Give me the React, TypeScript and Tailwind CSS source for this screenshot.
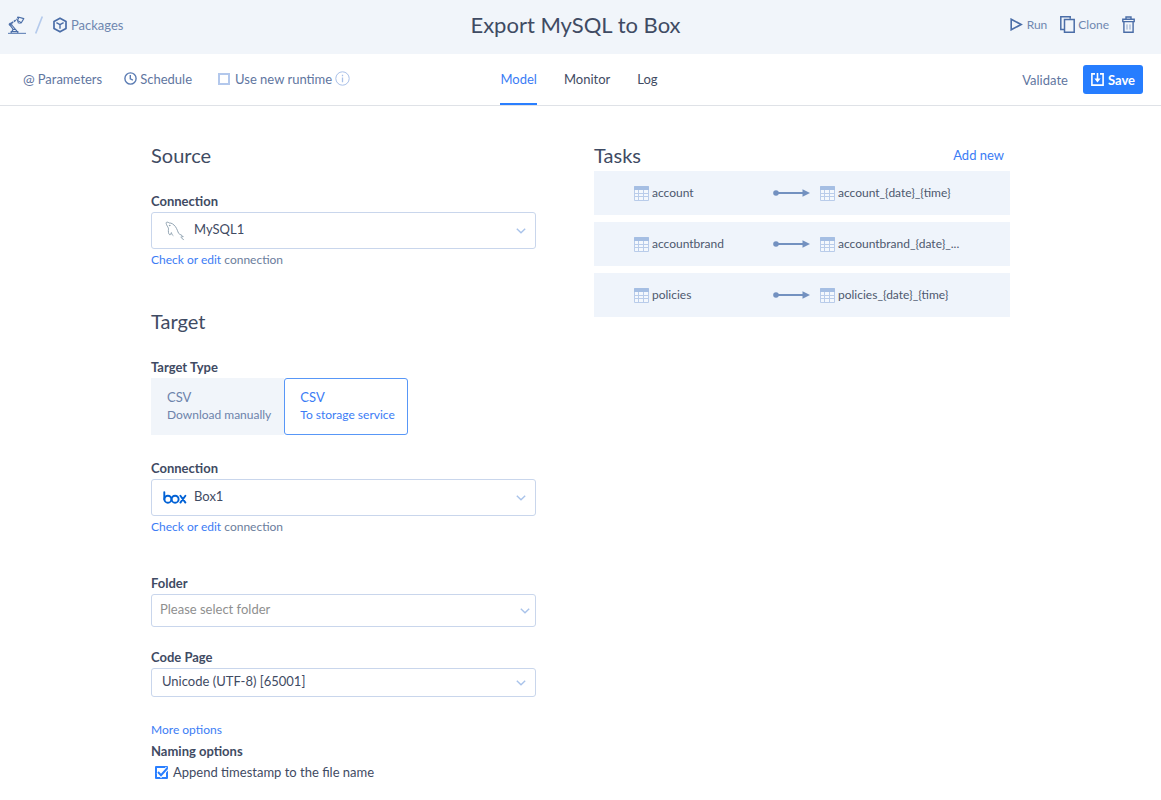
import type { ReactNode } from "react";

const tasks = [
  { source: "account", target: "account_{date}_{time}" },
  { source: "accountbrand", target: "accountbrand_{date}_{time}" },
  { source: "policies", target: "policies_{date}_{time}" },
];

function shorten(name: string) {
  return name.length > 24 ? name.slice(0, 20) + "..." : name;
}

function RobotArmIcon() {
  return (
    <svg width="18" height="18" viewBox="0 0 18 18" fill="none" stroke="#4a6da7" aria-hidden="true">
      <path d="M0 17.4h18" strokeWidth="1.2" stroke="#6f8dbd" />
      <path d="M3.2 17v-1.4h6.6V17M4 15.4l1-1.9h2.6l1.4 1.9" strokeWidth="1.2" />
      <path d="M2.4 9.6l3.2 4.2M3.8 9l3.6 4.4" strokeWidth="1.1" />
      <path d="M3.2 7.4L9 3.2" strokeWidth="1.6" strokeDasharray="2.4 .8" />
      <circle cx="2.4" cy="8.4" r="1.4" fill="#4a6da7" strokeWidth=".6" />
      <path d="M9.4 4.4L11 1.2l4.8 1.4-2.5 4.2z" strokeWidth="1.1" strokeLinejoin="round" />
      <path d="M9.6 4.4l.9 3M13 6.600l-1.600.8" strokeWidth="1.1" />
      <circle cx="10" cy="1.400" r="1" fill="#4a6da7" stroke="none" />
    </svg>
  );
}

function PackageIcon() {
  return (
    <svg width="14" height="16" viewBox="0 0 14 16" fill="none" stroke="#4a6da7" strokeWidth="1.700" strokeLinejoin="round" aria-hidden="true">
      <path d="M7 1.200l6 3.300v7L7 14.800l-6-3.300v-7z" />
      <path d="M3.400 5.600L7 7.600l3.600-2M7 7.600v4.200" strokeWidth="1.400" />
    </svg>
  );
}

function ClockIcon() {
  return (
    <svg width="13" height="13" viewBox="0 0 13 13" fill="none" stroke="#5b7cb3" strokeWidth="1.400" aria-hidden="true">
      <circle cx="6.500" cy="6.500" r="5.600" />
      <path d="M6.300 3v3.800l2.600 1.300" />
    </svg>
  );
}

function InfoIcon() {
  return (
    <svg width="15" height="15" viewBox="0 0 15 15" fill="none" stroke="#a9c0e8" aria-hidden="true">
      <circle cx="7.500" cy="7.500" r="6.700" strokeWidth="1" />
      <path d="M7.500 6.400v4.800M7.500 3.800v1.400" strokeWidth="1.300" />
    </svg>
  );
}

function RunIcon() {
  return (
    <svg width="13" height="13" viewBox="0 0 13 13" fill="none" stroke="#4a6da7" strokeWidth="1.600" aria-hidden="true">
      <path d="M1.200 1.200v10.600l10-5.300z" />
    </svg>
  );
}

function CloneIcon() {
  return (
    <svg width="15" height="17" viewBox="0 0 15 17" fill="none" stroke="#4a6da7" strokeWidth="1.500" aria-hidden="true">
      <path d="M4.500 13.500H.8V.8h9.400v2" />
      <path d="M4.500 3.500h9.700v12.700H4.500z" />
    </svg>
  );
}

function TrashIcon() {
  return (
    <svg width="13" height="17" viewBox="0 0 13 17" fill="none" stroke="#4a6da7" strokeWidth="1.400" aria-hidden="true">
      <path d="M4 3V1h5v2M.8 5.600V3.200h11.400v2.400zM1.900 5.800v10.400h9.200V5.800" />
      <path d="M5 8.400v5.200M8 8.400v5.200" strokeWidth="1" stroke="#8ba4cc" />
    </svg>
  );
}

function SaveIcon() {
  return (
    <svg width="13" height="13" viewBox="0 0 13 13" fill="none" stroke="#fff" strokeWidth="1.600" aria-hidden="true">
      <path d="M4 .9H.9v11.200h11.200V.9H9M6.500 0v7" />
      <path d="M3.400 5.600h6.200L6.500 9.400z" fill="#fff" stroke="none" />
    </svg>
  );
}

function ChevronIcon() {
  return (
    <svg width="10" height="6" viewBox="0 0 10 6" fill="none" stroke="#a9c3ea" strokeWidth="1.400" aria-hidden="true">
      <path d="M.8.8L5 4.800 9.200.8" />
    </svg>
  );
}

function MySqlIcon() {
  return (
    <svg width="20" height="20" viewBox="0 0 20 20" fill="none" stroke="#8499a8" strokeWidth=".9" strokeLinecap="round" strokeLinejoin="round" aria-hidden="true">
      <path d="M8 14.600c-.9-.4-1.300-1.900-1.600-3-.5.7-.8 2.600-1.700 2.200C3.300 13.200 3.200 9.600 3.500 8.200 3.700 6.800 2.400 5.600 1.800 4.200 1.300 3.100.8 1.700 1.500 1.300c.9-.5 2.100.2 2.900.7 1.800-.3 4.300 1.300 6 3.600 1.700 2.300 2.400 5.200 3.300 6.800.9 1.200 3.300 1.500 4.500 3.300-1.200 0-2 .1-2.400.5.8.9 2 1.300 2.700 2.500" />
      <circle cx="4.600" cy="4.600" r=".3" />
    </svg>
  );
}

function BoxLogo() {
  return (
    <svg width="24" height="13" viewBox="0 0 24 13" fill="none" stroke="#0061d5" strokeWidth="1.900" strokeLinecap="round" aria-hidden="true">
      <path d="M1.300 1.100v7.200" />
      <circle cx="4.900" cy="8.200" r="3.500" />
      <circle cx="12.100" cy="8.200" r="3.500" />
      <path d="M17.400 4.800l5 6.800M22.400 4.800l-5 6.800" />
    </svg>
  );
}

function GridIcon() {
  return (
    <svg width="15" height="15" viewBox="0 0 15 15" aria-hidden="true" className="shrink-0">
      <rect width="15" height="15" rx="1" fill="#b9ccea" />
      <path d="M0 1a1 1 0 011-1h13a1 1 0 011 1v3H0z" fill="#a5bee3" />
      <path d="M1 4h3v3H1zM5 4h4v3H5zM10 4h4v3h-4zM1 8h3v2H1zM5 8h4v2H5zM10 8h4v2h-4zM1 11h3v3H1zM5 11h4v3H5zM10 11h4v3h-4z" fill="#f4f8fd" />
    </svg>
  );
}

function ArrowIcon() {
  return (
    <svg width="37" height="8" viewBox="0 0 37 8" fill="#7391c0" aria-hidden="true">
      <circle cx="3" cy="4" r="2.800" />
      <path d="M3 3h27v2H3z" />
      <path d="M29.500.3L37 4l-7.500 3.700z" />
    </svg>
  );
}

type FieldProps = {
  id: string;
  label: string;
  options: string[];
  selectClass: string;
  chevronClass: string;
  icon?: ReactNode;
};

function SelectField({ id, label, options, selectClass, chevronClass, icon }: FieldProps) {
  return (
    <div>
      <label htmlFor={id} className="block font-bold">
        {label}
      </label>
      <div className="relative">
        <select
          id={id}
          className={
            "block w-full appearance-none rounded-[3px] border border-[#c9d6ec] bg-white pb-[3px] outline-none focus:border-[#2a7fff] " +
            selectClass
          }
        >
          {options.map((option) => (
            <option key={option}>{option}</option>
          ))}
        </select>
        {icon && (
          <span className="pointer-events-none absolute inset-y-0 left-3 flex w-6 items-center justify-center">{icon}</span>
        )}
        <span className={"pointer-events-none absolute inset-y-0 flex items-center " + chevronClass}>
          <ChevronIcon />
        </span>
      </div>
    </div>
  );
}

function ConnectionLink() {
  return (
    <p className="text-xs leading-[22px] text-[#6b7d9c]">
      <a href="#connection" className="text-[#3b7cf5]">
        Check or edit
      </a>{" "}
      connection
    </p>
  );
}

export default function App() {
  return (
    <div className="min-h-screen bg-white font-['Lato',sans-serif] text-[13px] leading-[22px] text-[#3f4b63]">
      <header className="grid h-[54px] grid-cols-[1fr_auto_1fr] items-center bg-[#f1f5fa] pr-[18px] pb-[5px] pl-2 text-[#6f87b0]">
        <nav aria-label="Breadcrumb" className="flex items-center">
          <a href="#home" aria-label="Home">
            <RobotArmIcon />
          </a>
          <svg width="8" height="18" viewBox="0 0 8 18" aria-hidden="true" className="mr-[10px] ml-[9px]">
            <path d="M.7 17.500L7.300.5" stroke="#b4caec" strokeWidth="1.600" />
          </svg>
          <a href="#packages" className="flex items-center gap-1">
            <PackageIcon />
            Packages
          </a>
        </nav>
        <h1 className="text-[22px] leading-8 text-[#3f4b63]">Export MySQL to Box</h1>
        <div className="flex items-center justify-end gap-[13px] text-xs">
          <button type="button" className="flex items-center gap-1">
            <RunIcon />
            Run
          </button>
          <button type="button" className="flex items-center gap-[3px]">
            <CloneIcon />
            Clone
          </button>
          <button type="button" aria-label="Delete" className="pr-2">
            <TrashIcon />
          </button>
        </div>
      </header>

      <div className="grid h-[52px] grid-cols-[1fr_auto_1fr] items-center border-b border-[#dfe2e7] pr-[18px] pl-[15px] text-[#5f769f]">
        <div className="flex items-center pb-[2px]">
          <button type="button" className="ml-2 flex items-center gap-[3px]">
            <span className="text-sm leading-[22px]">@</span>
            Parameters
          </button>
          <button type="button" className="ml-[22px] flex items-center gap-[3px]">
            <ClockIcon />
            Schedule
          </button>
          <label className="ml-[26px] flex items-center gap-[5px]">
            <input type="checkbox" className="size-3 appearance-none border-2 border-[#b3c8ec] bg-white checked:bg-[#2a7fff]" />
            Use new runtime
          </label>
          <button type="button" aria-label="About the new runtime" className="ml-[3px]">
            <InfoIcon />
          </button>
        </div>
        <nav aria-label="Views" className="flex gap-[27px] self-stretch text-[#3f4b63]">
          <a href="#model" aria-current="page" className="flex items-center border-b-2 border-[#2a7fff] text-[#3b7cf5]">
            Model
          </a>
          <a href="#monitor" className="flex items-center border-b-2 border-transparent">
            Monitor
          </a>
          <a href="#log" className="flex items-center border-b-2 border-transparent">
            Log
          </a>
        </nav>
        <div className="flex items-center justify-end gap-[15px]">
          <button type="button">Validate</button>
          <button type="button" className="flex h-[29px] items-center gap-1 rounded-[3px] bg-[#267dff] px-2 font-bold text-white">
            <SaveIcon />
            Save
          </button>
        </div>
      </div>

      <main className="mx-auto grid max-w-[859px] grid-cols-[385fr_416fr] gap-x-[58px] pt-[35px] pb-4">
        <div>
          <section>
            <h2 className="mb-[21px] text-xl leading-7">Source</h2>
            <SelectField
              id="source-connection"
              label="Connection"
              options={["MySQL1"]}
              selectClass="h-[37px] pr-8 pl-[42px]"
              chevronClass="right-[10px]"
              icon={<MySqlIcon />}
            />
            <ConnectionLink />
          </section>

          <section className="mt-9">
            <h2 className="mb-[21px] text-xl leading-7">Target</h2>
            <div role="group" aria-labelledby="target-type">
              <span id="target-type" className="block font-bold">
                Target Type
              </span>
              <div className="flex">
                <button type="button" aria-pressed="false" className="h-[57px] bg-[#f1f5fa] pr-[13px] pb-[2px] pl-4 text-left text-[#6d83ab]">
                  <span className="block leading-[18px]">CSV</span>
                  <span className="block text-xs leading-[18px]">Download manually</span>
                </button>
                <button
                  type="button"
                  aria-pressed="true"
                  className="h-[57px] rounded-[3px] border border-[#5897f7] bg-white pr-3 pb-[2px] pl-[15px] text-left text-[#3b7cf5]"
                >
                  <span className="block leading-[18px]">CSV</span>
                  <span className="block text-xs leading-[18px]">To storage service</span>
                </button>
              </div>
            </div>
            <div className="mt-[22px]">
              <SelectField
                id="target-connection"
                label="Connection"
                options={["Box1"]}
                selectClass="h-[37px] pr-8 pl-[42px]"
                chevronClass="right-[10px]"
                icon={<BoxLogo />}
              />
              <ConnectionLink />
            </div>
            <div className="mt-[34px]">
              <SelectField
                id="folder"
                label="Folder"
                options={["Please select folder"]}
                selectClass="h-[33px] pr-8 pl-2 text-[#8f8f8f]"
                chevronClass="right-[6px]"
              />
            </div>
            <div className="mt-[19px]">
              <SelectField
                id="code-page"
                label="Code Page"
                options={["Unicode (UTF-8) [65001]"]}
                selectClass="h-[29px] pr-8 pl-[10px]"
                chevronClass="right-[10px]"
              />
            </div>
            <a href="#more-options" className="mt-[22px] block w-fit text-xs leading-[22px] text-[#3b7cf5]">
              More options
            </a>
            <h3 className="leading-5 font-bold">Naming options</h3>
            <label className="flex w-fit items-center gap-[5px] pl-1">
              <span className="relative flex size-[13px]">
                <input type="checkbox" defaultChecked className="peer size-[13px] appearance-none rounded-[1px] border-2 border-[#2a7fff] bg-white" />
                <svg
                  width="13"
                  height="13"
                  viewBox="0 0 13 13"
                  fill="none"
                  aria-hidden="true"
                  className="pointer-events-none absolute inset-0 hidden peer-checked:block"
                >
                  <path d="M3 6l3 3.200L12.500 2" stroke="#fff" strokeWidth="4" />
                  <path d="M3 6l3 3.200L12.500 2" stroke="#2a7fff" strokeWidth="2" />
                </svg>
              </span>
              Append timestamp to the file name
            </label>
          </section>
        </div>

        <section>
          <div className="mb-[2px] flex items-center justify-between pr-[6px]">
            <h2 className="text-xl leading-7">Tasks</h2>
            <button type="button" className="text-[#3b7cf5]">
              Add new
            </button>
          </div>
          <ul className="flex flex-col gap-[7px]">
            {tasks.map((task) => (
              <li
                key={task.source}
                className="grid h-11 grid-cols-[139fr_37px_152fr] items-center bg-[#eff4fb] pr-12 pl-10 text-xs text-[#4d586e]"
              >
                <span className="flex items-center gap-[3px]">
                  <GridIcon />
                  {task.source}
                </span>
                <ArrowIcon />
                <span className="flex items-center gap-[3px] pl-[10px]">
                  <GridIcon />
                  {shorten(task.target)}
                </span>
              </li>
            ))}
          </ul>
        </section>
      </main>
    </div>
  );
}
